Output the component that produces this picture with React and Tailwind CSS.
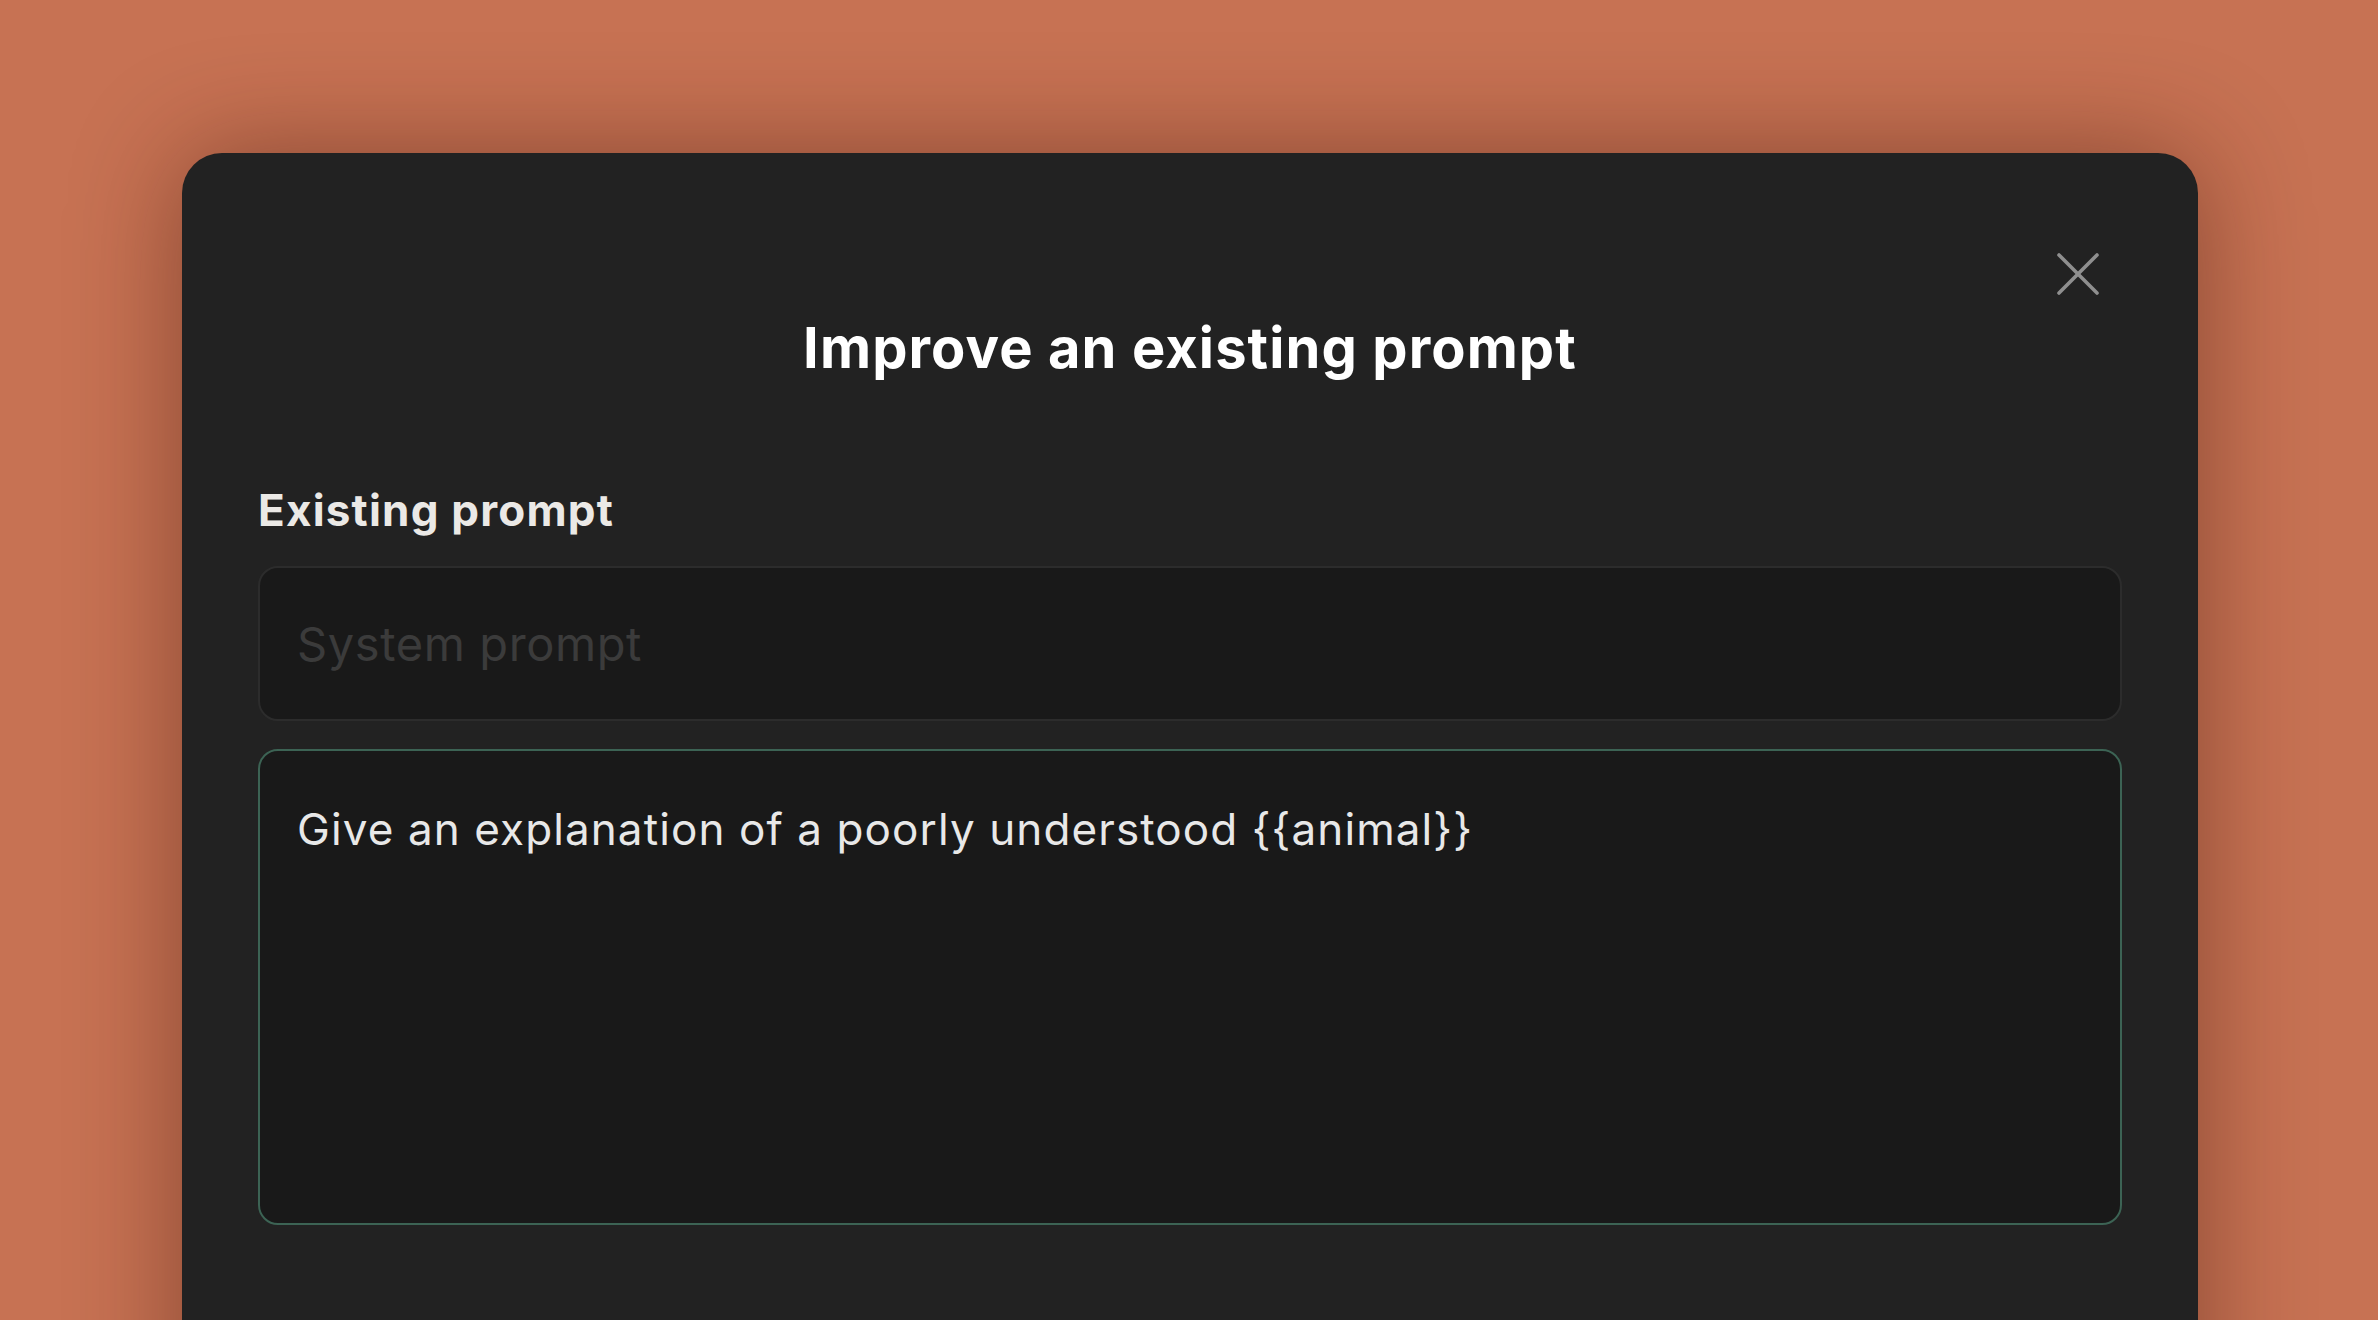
import React from "react";

export default function App() {
  return (
    <div className="h-[1320px] w-[2378px] overflow-hidden bg-[#c77253] pl-[182px] pr-[180px] pt-[153px]" style={{ fontFamily: "Inter, 'Noto Sans', sans-serif" }}>
      <div className="relative flex h-[1300px] flex-col rounded-[40px] bg-[#222222] px-[76px] pt-[167px] shadow-[0_0_110px_rgba(60,20,10,0.45)]">
        <button className="absolute right-[99px] top-[100px] flex h-[42px] w-[42px] items-center justify-center" aria-label="Close">
          <svg width="42" height="42" viewBox="0 0 42 42" fill="none">
            <path d="M2 2L40 40M40 2L2 40" stroke="#8f8f8f" strokeWidth="3.6" strokeLinecap="round" />
          </svg>
        </button>
        <h1 className="text-center text-[56px] font-bold leading-none tracking-[1.1px] text-white">
          Improve an existing prompt
        </h1>
        <div className="mt-[112px] text-[44px] font-bold leading-none tracking-[1.2px] text-[#ebe9e6]">Existing prompt</div>
        <div className="mt-[34px] flex h-[155px] items-center rounded-[20px] border-2 border-[#2c2c2c] bg-[#191919] px-[37px]">
          <span className="text-[47px] leading-none tracking-[0.6px] text-[#3b3b3b]">System prompt</span>
        </div>
        <div className="mt-[28px] h-[476px] rounded-[20px] border-2 border-[#3c6354] bg-[#191919] px-[37px] pt-[45px]">
          <p className="text-[44px] leading-[1.5] tracking-[1.1px] text-[#e8e8e8]">
            Give an explanation of a poorly understood {"{{animal}}"}
          </p>
        </div>
      </div>
    </div>
  );
}
